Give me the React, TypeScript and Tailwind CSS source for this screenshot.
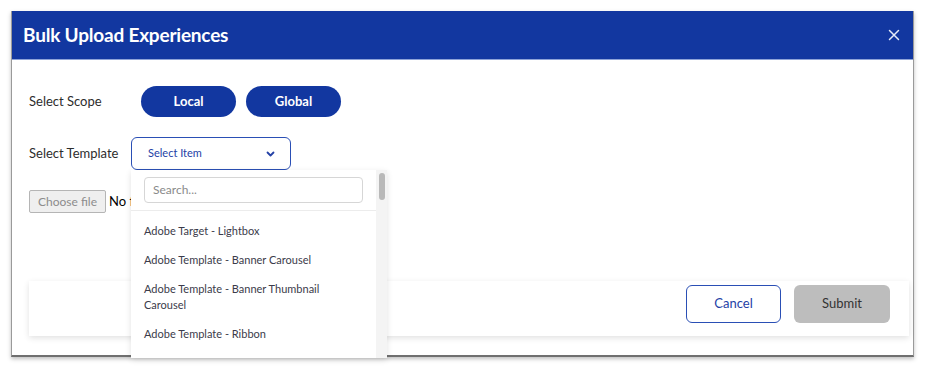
import React from "react";

const font = { fontFamily: "Lato, 'Noto Sans', sans-serif" };

const templates = [
  "Adobe Target - Lightbox",
  "Adobe Template - Banner Carousel",
  "Adobe Template - Banner Thumbnail Carousel",
  "Adobe Template - Ribbon",
];

export default function App() {
  return (
    <div className="w-[936px] h-[370px] bg-white relative overflow-hidden" style={font}>
      <div className="ml-[11px] mt-[11px] w-[903px] h-[346px] bg-white border-l border-r border-[#9a9a9a] border-b-2 border-b-[#6f6f6f] shadow-[0_2px_4px_rgba(0,0,0,0.25)] flex flex-col">
        {/* Header */}
        <div className="h-[49px] bg-[#1237a0] flex items-center justify-between pl-[11px] pr-3 border-b border-[#8ea3d8]">
          <h2 className="text-white text-[19px] font-bold tracking-[-0.2px]">Bulk Upload Experiences</h2>
          <svg width="12" height="12" viewBox="0 0 12 12" className="mr-[1px]">
            <path d="M1.5 1.5 L10.5 10.5 M10.5 1.5 L1.5 10.5" stroke="#e6ebf7" strokeWidth="1.5" strokeLinecap="round" />
          </svg>
        </div>

        {/* Body */}
        <div className="flex-1 pl-[17px] pr-[4px] pt-[26px] flex flex-col">
          <div className="flex items-center h-[31px]">
            <span className="w-[112px] text-[13px] text-[#2d2d2d]">Select Scope</span>
            <button className="w-[95px] h-[31px] rounded-full bg-[#1237a0] text-white text-[13px] font-bold">Local</button>
            <button className="ml-[10px] w-[95px] h-[31px] rounded-full bg-[#1237a0] text-white text-[13px] font-bold">Global</button>
          </div>

          <div className="flex items-center mt-[20px] h-[33px]">
            <span className="w-[102px] text-[13px] text-[#2d2d2d]">Select Template</span>
            <div className="relative">
              <div className="w-[160px] h-[33px] border border-[#2a4fb5] rounded-[6px] flex items-center justify-between pl-4 pr-[15px]">
                <span className="text-[11px] text-[#2441a6]">Select Item</span>
                <svg width="9" height="6" viewBox="0 0 9 6">
                  <path d="M1.5 1.5 L4.5 4.5 L7.5 1.5" stroke="#2441a6" strokeWidth="1.8" fill="none" strokeLinecap="round" strokeLinejoin="round" />
                </svg>
              </div>
              {/* Dropdown */}
              <div className="absolute left-0 top-[33px] w-[256px] h-[188px] bg-white z-10 shadow-[0_2px_6px_rgba(0,0,0,0.12)] flex">
                <div className="flex-1 flex flex-col">
                  <div className="px-[13px] pt-[7px] pb-[7px] border-b border-[#ececec]">
                    <div className="h-[26px] border border-[#d6d6d6] rounded-[4px] flex items-center px-[8px] text-[12px] text-[#8a8a8a]">
                      Search...
                    </div>
                  </div>
                  <div className="pl-[13px] pr-3 pt-[5px] flex flex-col text-[11px] text-[#3b3b4a]">
                    {templates.map((t) => (
                      <div key={t} className="py-[6.5px] leading-[16px]">{t}</div>
                    ))}
                  </div>
                </div>
                <div className="w-[11px] bg-[#f4f4f4] pt-[3px] flex justify-center">
                  <div className="w-[6px] h-[27px] rounded-full bg-[#b9b9b9]" />
                </div>
              </div>
            </div>
          </div>

          <div className="flex items-center mt-[20px]">
            <button className="w-[77px] h-[23px] bg-[#efefef] border border-[#b5b5b5] rounded-[2px] text-[12px] text-[#8c8c8c]">Choose file</button>
            <span className="ml-[3px] text-[13px] text-black">No file chosen</span>
          </div>

          <div className="mt-[68px] w-[880px] h-[55px] bg-white shadow-[0_2px_6px_rgba(0,0,0,0.12)] flex items-start justify-end pt-[4px] pr-[19px] gap-[13px]">
            <button className="w-[95px] h-[38px] border border-[#2a4fb5] rounded-[6px] text-[13px] text-[#2441a6] bg-white">Cancel</button>
            <button className="w-[96px] h-[38px] rounded-[6px] bg-[#bdbdbd] text-[13px] text-[#333]">Submit</button>
          </div>
        </div>
      </div>
    </div>
  );
}
